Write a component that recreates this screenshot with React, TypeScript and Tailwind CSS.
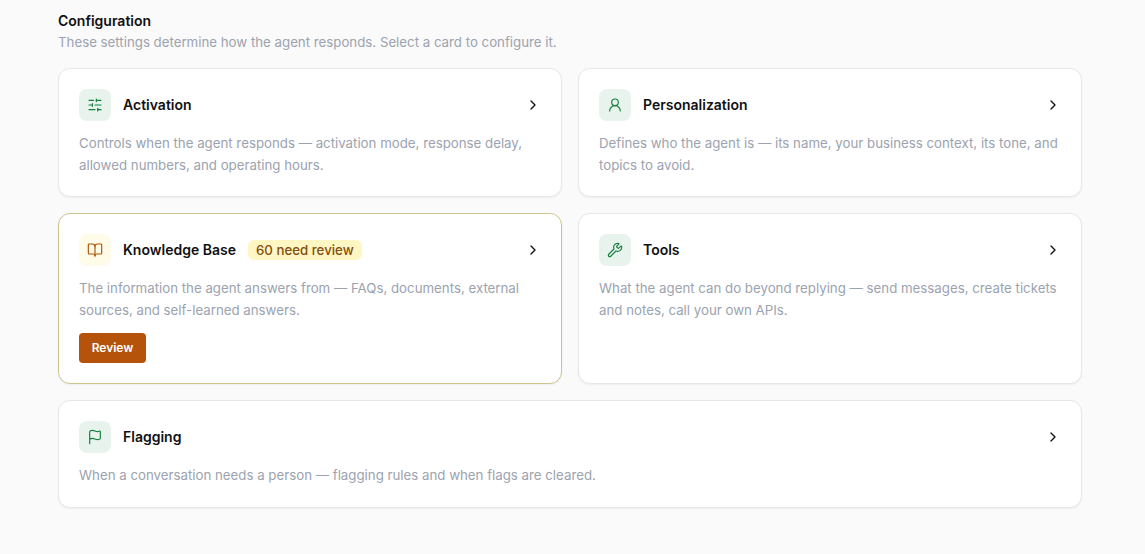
import React from "react";
import { BookOpen, ChevronRight, Flag, SlidersHorizontal, UserRound, Wrench } from "lucide-react";

interface CardProps {
  icon: React.ReactNode;
  title: string;
  text: React.ReactNode;
  warn?: boolean;
  badge?: string;
  action?: string;
  className?: string;
}

function Card({ icon, title, text, warn, badge, action, className }: CardProps) {
  return (
    <div
      className={`rounded-xl border bg-white p-5 shadow-[0_1px_2px_rgba(0,0,0,0.05)] ${
        warn ? "border-[#cdc48f]" : "border-[#e7e7e9]"
      } ${className ?? ""}`}
    >
      <div className="flex items-center">
        <div
          className={`flex h-8 w-8 items-center justify-center rounded-lg ${
            warn ? "bg-[#fefbe8] text-[#b45309]" : "bg-[#e9f3ee] text-[#15803d]"
          }`}
        >
          {icon}
        </div>
        <span className="ml-3 text-sm font-semibold text-[#111113]">{title}</span>
        {badge && (
          <span className="ml-3 rounded-md bg-[#fef6c3] px-2 py-px text-[13.28px] font-medium leading-[18px] text-[#854d0e]">
            {badge}
          </span>
        )}
        <ChevronRight className="ml-auto h-4 w-4 text-[#111113]" strokeWidth={2} />
      </div>
      <p className="mt-[11px] text-[13.28px] leading-[22px] text-[#9ca3af]">{text}</p>
      {action && (
        <button className="mt-3 block h-[30px] w-[67px] rounded bg-[#b45309] text-xs font-semibold text-white">
          {action}
        </button>
      )}
    </div>
  );
}

export default function App() {
  return (
    <div className="min-h-[554px] bg-[#fafafa] pb-[46px] pl-[58px] pr-[63px] pt-[11px] font-['Inter',sans-serif]">
      <h2 className="text-sm font-semibold leading-5 text-[#111113]">Configuration</h2>
      <p className="mb-4 mt-px text-[13.28px] leading-5 text-[#9ca3af]">
        These settings determine how the agent responds. Select a card to configure it.
      </p>
      <div className="grid grid-cols-2 gap-4">
        <Card
          icon={<SlidersHorizontal className="h-4 w-4" strokeWidth={1.75} />}
          title="Activation"
          text="Controls when the agent responds — activation mode, response delay, allowed numbers, and operating hours."
        />
        <Card
          icon={<UserRound className="h-4 w-4" strokeWidth={1.75} />}
          title="Personalization"
          text="Defines who the agent is — its name, your business context, its tone, and topics to avoid."
        />
        <Card
          warn
          icon={<BookOpen className="h-4 w-4" strokeWidth={1.75} />}
          title="Knowledge Base"
          badge="60 need review"
          action="Review"
          text="The information the agent answers from — FAQs, documents, external sources, and self-learned answers."
        />
        <Card
          icon={<Wrench className="h-4 w-4" strokeWidth={1.75} />}
          title="Tools"
          text="What the agent can do beyond replying — send messages, create tickets and notes, call your own APIs."
        />
        <Card
          className="col-span-2 pb-[21px]"
          icon={<Flag className="h-4 w-4" strokeWidth={1.75} />}
          title="Flagging"
          text="When a conversation needs a person — flagging rules and when flags are cleared."
        />
      </div>
    </div>
  );
}
